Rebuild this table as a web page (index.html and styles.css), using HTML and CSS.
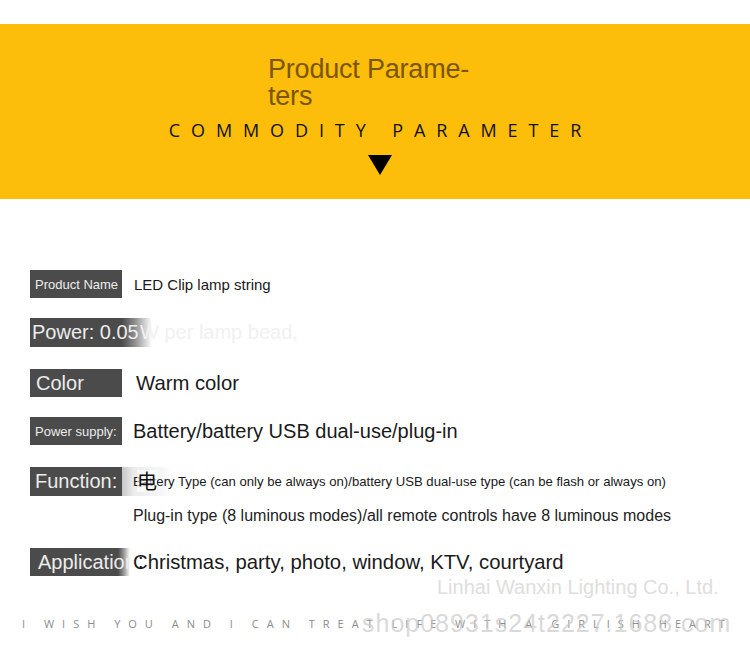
FILE: index.html
```html
<!DOCTYPE html>
<html>
<head>
<meta charset="utf-8">
<link rel="stylesheet" href="styles.css">
</head>
<body>
<div class="page">
  <header class="banner">
    <div class="title">Product Parame-<br>ters<span class="smudge"></span></div>
    <div class="subtitle">COMMODITY PARAMETER</div>
    <svg class="arrow" width="24" height="20" viewBox="0 0 24 20"><polygon points="0,0 24,0 12,20" fill="#000"/></svg>
  </header>

  <section class="params">
    <div class="row r1">
      <div class="label small">Product Name</div>
      <div class="value v15">LED Clip lamp string</div>
    </div>
    <div class="row r2">
      <div class="label big fade-long">Power: 0.05</div>
      <div class="value v20 ghost">W per lamp bead,</div>
    </div>
    <div class="row r3">
      <div class="label big">Color</div>
      <div class="value v20 warm">Warm color</div>
    </div>
    <div class="row r4">
      <div class="label small">Power supply:</div>
      <div class="value v20">Battery/battery USB dual-use/plug-in</div>
    </div>
    <div class="row r5">
      <div class="label big fade-smear">Function:</div>
      <div class="value v13">Battery Type (can only be always on)/battery USB dual-use type (can be flash or always on)<span class="cjk">电</span></div>
    </div>
    <div class="row r5b">
      <div class="value line2">Plug-in type (8 luminous modes)/all remote controls have 8 luminous modes</div>
    </div>
    <div class="row r6">
      <div class="label big fade-short clip">Application</div>
      <div class="value v20 app">Christmas, party, photo, window, KTV, courtyard<span class="colon">:</span></div>
    </div>
  </section>

  <div class="company">Linhai Wanxin Lighting Co., Ltd.</div>
  <footer class="footer">
    <div class="motto">I WISH YOU AND I CAN TREAT LIFE WITH A GIRLISH HEART</div>
    <div class="shop">shop08931s24t2227.1688.com</div>
  </footer>
</div>
</body>
</html>
```

FILE: styles.css
```css
html, body {
  margin: 0;
  padding: 0;
  background: #ffffff;
}
.page {
  width: 750px;
  height: 654px;
  position: relative;
  overflow: hidden;
  font-family: "Liberation Sans", Arial, sans-serif;
}
.banner {
  margin-top: 24px;
  height: 175px;
  background: #fcbd0b;
  display: flex;
  flex-direction: column;
  align-items: center;
}
.title {
  position: relative;
  align-self: flex-start;
  margin-left: 268px;
  margin-top: 32px;
  font-size: 27px;
  line-height: 27px;
  color: #7a5600;
  letter-spacing: -0.2px;
}
.smudge {
  position: absolute;
  left: 52px;
  top: 30px;
  width: 150px;
  height: 22px;
  background: #fdc21a;
  filter: blur(3px);
  z-index: -1;
}
.subtitle {
  margin-top: 8px;
  padding-left: 11px;
  font-family: "Open Sans", sans-serif;
  font-size: 18px;
  line-height: 24px;
  letter-spacing: 10.9px;
  color: #111;
}
.arrow {
  display: block;
  margin-top: 13px;
  margin-left: 10px;
}
.params {
  padding-left: 30px;
  padding-top: 71px;
  display: flex;
  flex-direction: column;
}
.row {
  display: flex;
  align-items: center;
  height: 28px;
  position: relative;
}
.r2 { margin-top: 20px; height: 29px; }
.r3 { margin-top: 22px; }
.r4 { margin-top: 20px; }
.r5 { margin-top: 22px; height: 29px; }
.r5b { margin-top: 6px; height: 28px; }
.r6 { margin-top: 18px; }
.label {
  width: 92px;
  height: 100%;
  box-sizing: border-box;
  background: #4b4b4b;
  color: #ececec;
  white-space: nowrap;
  display: flex;
  align-items: center;
  flex-shrink: 0;
}
.label.small {
  font-size: 13px;
  padding-left: 5px;
}
.label.big {
  font-size: 20px;
  padding-left: 6px;
}
.fade-long {
  width: 122px;
  padding-left: 2px !important;
  background: linear-gradient(90deg, #4b4b4b 0, #4b4b4b 92px, #8a8a8a 104px, #ffffff 122px);
}
.fade-smear {
  width: 92px;
  padding-left: 5px !important;
  position: relative;
}
.fade-smear::after {
  content: "";
  position: absolute;
  left: 92px;
  top: 0;
  width: 50px;
  height: 100%;
  background: linear-gradient(90deg, #c8c8c8 0, #ececec 12px, #f6f6f6 40px, rgba(255,255,255,0) 50px);
}
.fade-short {
  width: 100px;
  padding-left: 8px !important;
  background: linear-gradient(90deg, #4b4b4b 0, #4b4b4b 88px, #9a9a9a 94px, #ffffff 100px);
}
.clip {
  overflow: hidden;
}
.value {
  margin-left: 12px;
  color: #1a1a1a;
  white-space: nowrap;
  position: relative;
}
.v13 { font-size: 13.15px; margin-left: 11px; }
.v15 { font-size: 15px; }
.v20 { font-size: 20px; margin-left: 11px; }
.row .warm { margin-left: 14px; font-size: 20.3px; }
.row .app { margin-left: 3px; font-size: 20.3px; }
.row .line2 { margin-left: 103px; font-size: 16px; color: #222; }
.row .ghost {
  color: #f1f1f1;
  margin-left: -12px;
}
.cjk {
  position: absolute;
  left: 4px;
  top: -4px;
  font-family: "Noto Sans CJK SC", sans-serif;
  font-size: 20px;
  color: #111;
  background: rgba(255,255,255,0.6);
  line-height: 22px;
}
.colon {
  position: absolute;
  left: 5px;
  top: -1px;
  font-size: 20px;
  color: #111;
}
.company {
  position: absolute;
  left: 437px;
  top: 576px;
  font-size: 20px;
  color: #dedede;
}
.footer {
  position: absolute;
  left: 0;
  top: 610px;
  width: 750px;
  height: 30px;
}
.motto {
  position: absolute;
  left: 22px;
  top: 6px;
  font-family: "Open Sans", sans-serif;
  font-size: 11px;
  letter-spacing: 8px;
  color: #8c8c8c;
  white-space: nowrap;
}
.shop {
  position: absolute;
  left: 362px;
  top: -1px;
  font-size: 25px;
  color: rgba(200,200,200,0.7);
  white-space: nowrap;
  letter-spacing: 1px;
}
```
